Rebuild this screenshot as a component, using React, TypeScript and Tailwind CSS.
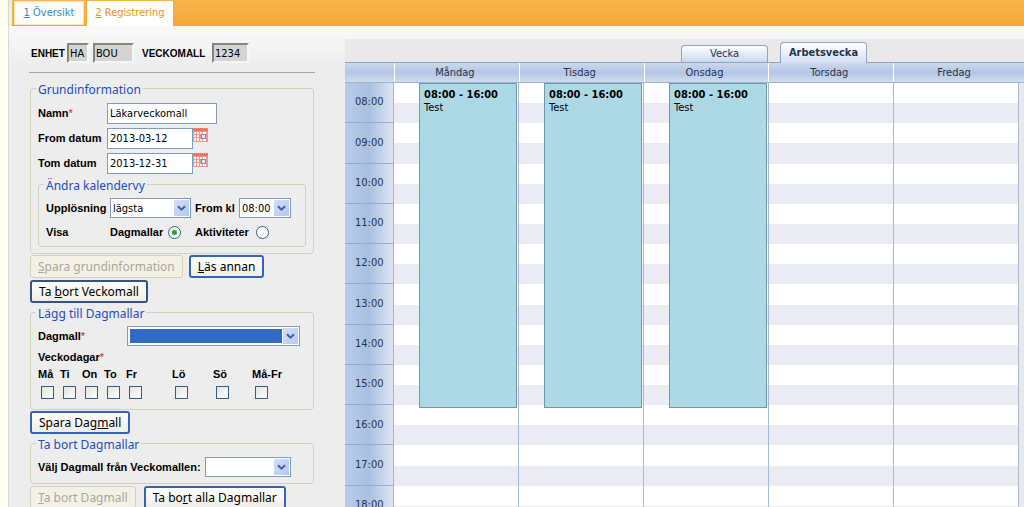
import { ReactNode, SelectHTMLAttributes } from "react";
import clsx from "clsx";

const HOURS = ["08:00", "09:00", "10:00", "11:00", "12:00", "13:00", "14:00", "15:00", "16:00", "17:00", "18:00"];

const DAYS = [
    { name: "Måndag", event: true },
    { name: "Tisdag", event: true },
    { name: "Onsdag", event: true },
    { name: "Torsdag", event: false },
    { name: "Fredag", event: false },
];

const WEEKDAYS = ["Må", "Ti", "On", "To", "Fr", "Lö", "Sö", "Må-Fr"];

function Group({ title, className, children }: { title: string; className?: string; children: ReactNode }) {
    return (
        <fieldset className={clsx("min-w-0 rounded border border-[#d0d0bf]", className)}>
            <legend className="-ml-0.5 px-0.5 pt-1 font-['Noto_Sans',sans-serif] text-[12px] leading-[14px] text-[#1c4fc0]">
                {title}
            </legend>
            {children}
        </fieldset>
    );
}

function Label({ htmlFor, required, className, children }: { htmlFor: string; required?: boolean; className?: string; children: ReactNode }) {
    return (
        <label htmlFor={htmlFor} className={clsx("shrink-0 font-bold whitespace-nowrap", className)}>
            {children}
            {required && <span className="font-normal text-[#e01020]">*</span>}
        </label>
    );
}

function Select({ className, highlighted, children, ...props }: SelectHTMLAttributes<HTMLSelectElement> & { highlighted?: boolean }) {
    return (
        <div className={clsx("relative h-5 shrink-0 border border-[#7f9db9] bg-white", className)}>
            <select
                {...props}
                className={clsx(
                    "block h-full w-full appearance-none border-2 border-white font-['DejaVu_Sans_Condensed','DejaVu_Sans',sans-serif] outline-none",
                    highlighted ? "bg-[#316ac5]" : "bg-white"
                )}
            >
                {children}
            </select>
            <span className="pointer-events-none absolute inset-y-0 right-0 flex w-[17px] items-center justify-center border border-white bg-linear-to-br from-[#d3e0fd] to-[#b2c7f5]">
                <svg width="9" height="7" viewBox="0 0 9 7" fill="none" stroke="#4d6185" strokeWidth="2">
                    <path d="M1 1.2 4.5 4.7 8 1.2" />
                </svg>
            </span>
        </div>
    );
}

function ActionButton({ disabled, focused, children }: { disabled?: boolean; focused?: boolean; children: ReactNode }) {
    return (
        <button
            disabled={disabled}
            className={clsx(
                "h-[23px] rounded-[3px] font-['Noto_Sans',sans-serif] text-[12px] leading-4 whitespace-nowrap",
                disabled && "border border-[#d2cfbd] bg-[#f3f1e6] px-[7px] text-[#aaa89a]",
                !disabled && "border-2 bg-linear-to-b from-white to-[#eeede6] px-[7px] text-black",
                !disabled && (focused ? "border-[#3763b4]" : "border-[#33567f]")
            )}
        >
            {children}
        </button>
    );
}

function DateIcon() {
    return (
        <svg width="15" height="15" viewBox="0 0 15 15" shapeRendering="crispEdges">
            <path d="M0 0h15v14H0z" fill="#f09a8e" />
            <path d="M0 1h15v2H0z" fill="#e87464" />
            <path d="M1 0h1v1H1zM3 0h1v1H3zM5 0h1v1H5zM7 0h1v1H7zM9 0h1v1H9zM11 0h1v1h-1zM13 0h1v1h-1z" fill="#e06a5c" />
            <path
                d="M1 4h2v2H1zM4 4h2v2H4zM7 4h2v2H7zM10 4h3v2h-3zM1 7h2v2H1zM4 7h2v2H4zM1 10h2v3H1zM4 10h2v3H4zM7 11h2v2H7zM10 11h3v2h-3z"
                fill="#fff1ee"
            />
            <path d="M8 6h5v5H8z" fill="#8087c8" />
            <path d="M9 7h3v3H9z" fill="#dbe5ff" />
        </svg>
    );
}

function DateField({ id, label, value }: { id: string; label: string; value: string }) {
    return (
        <div className="flex h-[21px] items-center">
            <Label htmlFor={id} className="w-[69px]">{label}</Label>
            <input id={id} defaultValue={value} className="h-full w-[86px] border border-[#7f9db9] bg-white px-0.5 font-['DejaVu_Sans_Condensed','DejaVu_Sans',sans-serif]" />
            <button aria-label={"Välj " + label} className="self-start">
                <DateIcon />
            </button>
        </div>
    );
}

function Radio({ id, checked }: { id: string; checked?: boolean }) {
    return (
        <input
            id={id}
            type="radio"
            name="visa"
            defaultChecked={checked}
            className="size-[13px] shrink-0 appearance-none rounded-full border border-[#2f5f86] bg-white checked:bg-[radial-gradient(circle,#27a327_0_2px,#ffffff_3px)]"
        />
    );
}

function Sidebar() {
    const readOnly = "h-5 border-2 border-t-[#85857c] border-l-[#85857c] border-r-[#f6f6f2] border-b-[#f6f6f2] bg-[#d4d4d4] pl-px font-['DejaVu_Sans_Condensed','DejaVu_Sans',sans-serif]";

    return (
        <form className="w-[286px] shrink-0 font-['Liberation_Sans',sans-serif]" onSubmit={(e) => e.preventDefault()}>
            <div className="flex h-[30px] items-start border-b border-[#a5a5a0]">
                <div className="flex h-5 items-center pl-0.5">
                    <Label htmlFor="enhet" className="w-9 text-[10px]">ENHET</Label>
                    <input id="enhet" readOnly defaultValue="HA" className={clsx(readOnly, "w-[22px]")} />
                    <input aria-label="Enhetsnamn" readOnly defaultValue="BOU" className={clsx(readOnly, "ml-1 w-[41px]")} />
                    <Label htmlFor="veckomall" className="ml-2 w-[70px] text-[10px]">VECKOMALL</Label>
                    <input id="veckomall" readOnly defaultValue="1234" className={clsx(readOnly, "w-[37px]")} />
                </div>
            </div>

            {/* Basic data */}
            <Group title="Grundinformation" className="mt-1.5 mr-px ml-px px-[7px] pb-1.5">
                <div className="flex flex-col gap-1 pt-1.5">
                    <div className="flex h-[21px] items-center">
                        <Label htmlFor="namn" required className="w-[69px]">Namn</Label>
                        <input id="namn" defaultValue="Läkarveckomall" className="h-full w-[110px] border border-[#7f9db9] bg-white px-0.5 font-['DejaVu_Sans_Condensed','DejaVu_Sans',sans-serif]" />
                    </div>
                    <DateField id="from-datum" label="From datum" value="2013-03-12" />
                    <DateField id="tom-datum" label="Tom datum" value="2013-12-31" />
                </div>
                <Group title="Ändra kalendervy" className="mt-px pr-2 pb-1 pl-[7px]">
                    <div className="flex items-center pt-[5px]">
                        <Label htmlFor="upplosning" className="w-16">Upplösning</Label>
                        <Select id="upplosning" className="w-[81px]">
                            <option>lägsta</option>
                        </Select>
                        <Label htmlFor="from-kl" className="ml-1 w-11">From kl</Label>
                        <Select id="from-kl" className="w-[52px]">
                            <option>08:00</option>
                        </Select>
                    </div>
                    <div className="mt-1 flex h-5 items-center">
                        <span className="w-16 font-bold">Visa</span>
                        <Label htmlFor="dagmallar" className="w-[58px]">Dagmallar</Label>
                        <Radio id="dagmallar" checked />
                        <Label htmlFor="aktiviteter" className="ml-3.5 w-[61px]">Aktiviteter</Label>
                        <Radio id="aktiviteter" />
                    </div>
                </Group>
            </Group>

            <div className="mt-px ml-px flex flex-wrap gap-x-1.5 gap-y-0.5">
                <ActionButton disabled><u>S</u>para grundinformation</ActionButton>
                <ActionButton focused><u>L</u>äs annan</ActionButton>
                <ActionButton>Ta <u>b</u>ort Veckomall</ActionButton>
            </div>

            {/* Add day templates */}
            <Group title="Lägg till Dagmallar" className="mr-px ml-px px-[7px] pb-2.5">
                <div className="flex items-center pt-[5px]">
                    <Label htmlFor="dagmall" required className="w-[89px]">Dagmall</Label>
                    <Select id="dagmall" highlighted className="w-[173px]" />
                </div>
                <p className="pt-[3px] leading-4 font-bold">
                    Veckodagar<span className="font-normal text-[#e01020]">*</span>
                </p>
                <div className="grid grid-cols-[22px_22px_22px_22px_46px_41px_39px_1fr] pt-px">
                    {WEEKDAYS.map((day) => (
                        <label key={day} className="flex flex-col items-start gap-1 leading-4 font-bold">
                            {day}
                            <input type="checkbox" className="ml-[3px] size-[13px] appearance-none border border-[#2f5f86] bg-linear-to-br from-[#e2e2dd] to-white" />
                        </label>
                    ))}
                </div>
            </Group>

            <div className="mt-px ml-px flex">
                <ActionButton focused>Spara Dag<u>m</u>all</ActionButton>
            </div>

            {/* Remove day templates */}
            <Group title="Ta bort Dagmallar" className="mr-px ml-px px-[7px] pb-1.5">
                <div className="flex items-center pt-[5px]">
                    <Label htmlFor="valj-dagmall" className="w-[167px]">Välj Dagmall från Veckomallen:</Label>
                    <Select id="valj-dagmall" className="w-[86px]" />
                </div>
            </Group>

            <div className="mt-0.5 ml-px flex gap-2">
                <ActionButton disabled><u>T</u>a bort Dagmall</ActionButton>
                <ActionButton focused>Ta bo<u>r</u>t alla Dagmallar</ActionButton>
            </div>
        </form>
    );
}

function Calendar() {
    return (
        <section className="min-w-0 flex-1 bg-[#e9e9e9] text-[#24344f]">
            <div className="flex h-6 items-end justify-end gap-3 border-b border-[#8ea6c4] pr-[157px]">
                <button className="h-[17px] w-[87px] rounded-t-sm border border-b-0 border-[#8ea6c4] bg-linear-to-b from-white to-[#cbd8ec]">
                    Vecka
                </button>
                <button className="-mb-px h-[21px] w-[87px] rounded-t-sm border border-b-0 border-[#8ea6c4] bg-linear-to-b from-white to-[#d4e0f1] font-bold">
                    Arbetsvecka
                </button>
            </div>

            {/* Day names */}
            <div className="flex h-5 border-b border-[#9fb4d0] bg-linear-to-b from-[#cbd8ed] via-[#b3c6e4] to-[#d0dcef] pr-1.5">
                <div className="w-[49px] shrink-0" />
                <div className="grid flex-1 grid-cols-5">
                    {DAYS.map((day) => (
                        <div key={day.name} className="border-l border-white pr-1 text-center leading-[19px]">{day.name}</div>
                    ))}
                </div>
            </div>

            <div className="flex h-[443px] pr-[5px]">
                <div className="grid w-[49px] shrink-0 auto-rows-fr border-r border-[#9fb4d0] bg-linear-to-r from-[#b9cbe8] via-[#a9c0e2] to-[#dce5f3]">
                    {HOURS.map((hour) => (
                        <div key={hour} className="flex items-center border-b border-[#95acd0] pl-2.5">{hour}</div>
                    ))}
                </div>
                <div className="grid flex-1 grid-cols-5">
                    {DAYS.map((day) => (
                        <div key={day.name} className="relative grid auto-rows-fr border-r border-[#a9bccf] bg-white">
                            {HOURS.map((hour) => (
                                <div key={hour} className="flex items-end">
                                    <div className="h-1/2 w-full bg-[#ebecf3]" />
                                </div>
                            ))}
                            {day.event && (
                                <article className="absolute top-0 right-px left-[25px] h-[325px] border border-[#6f98a8] bg-[#add8e6] px-1 pt-1 leading-[13px] text-black">
                                    <h3 className="font-bold">08:00 - 16:00</h3>
                                    <p>Test</p>
                                </article>
                            )}
                        </div>
                    ))}
                </div>
            </div>
        </section>
    );
}

export default function App() {
    return (
        <div className="flex h-screen overflow-hidden bg-[#fffff0] pl-2 font-['DejaVu_Sans_Condensed','DejaVu_Sans',sans-serif] text-[11px] text-black">
            <div className="flex min-w-0 flex-1 flex-col border-l border-[#d8d8d4] bg-[#ededed]">
                <nav className="ml-[3px] flex h-[26px] shrink-0 gap-[3px] bg-linear-to-b from-[#f8b44c] to-[#f4a932] pt-px pl-0.5">
                    <a href="#oversikt" className="flex h-6 w-[70px] items-center justify-center border border-[#fbe3b8] bg-[#fbfbfa] text-[#3590bd]">
                        <span><u>1</u> Översikt</span>
                    </a>
                    <a href="#registrering" className="flex h-[25px] w-[86px] items-center justify-center bg-white text-[#ee8f22]">
                        <span><u>2</u> Registrering</span>
                    </a>
                </nav>
                <main className="flex flex-1 items-start gap-[30px] bg-linear-to-b from-[#fafafa] to-[#ededed] to-[40px] pl-5">
                    <div className="pt-[17px]">
                        <Sidebar />
                    </div>
                    <div className="flex min-w-0 flex-1 pt-[13px]">
                        <Calendar />
                    </div>
                </main>
            </div>
        </div>
    );
}
